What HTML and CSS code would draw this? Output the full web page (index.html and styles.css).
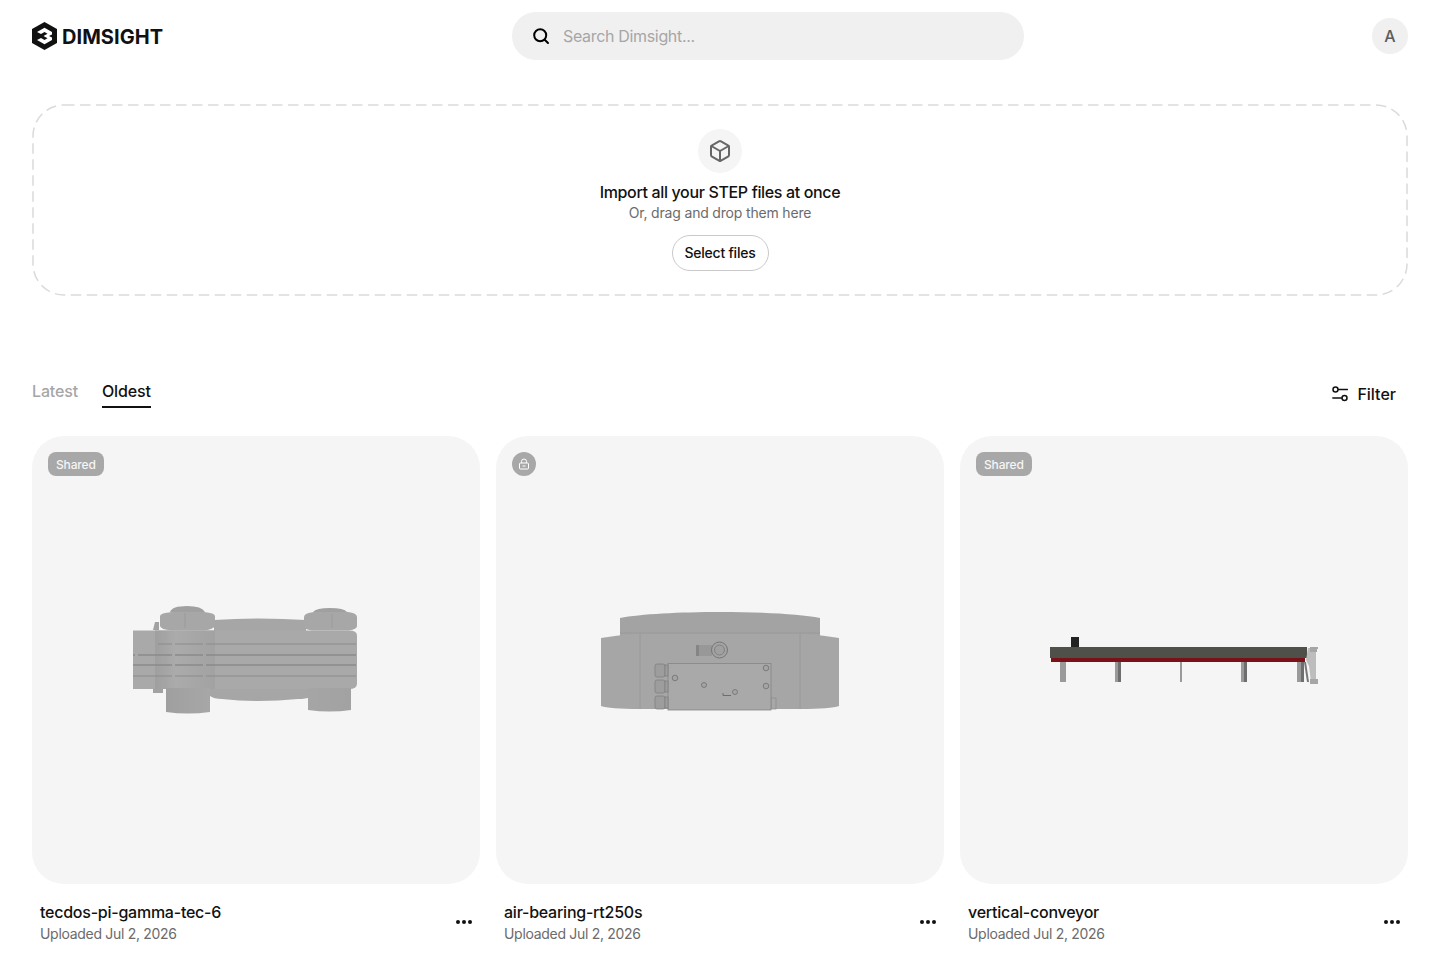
FILE: index.html
```html
<!DOCTYPE html>
<html lang="en">
<head>
<meta charset="utf-8">
<title>Dimsight</title>
<link rel="stylesheet" href="styles.css">
</head>
<body>
<header class="topbar">
  <a class="brand">
    <svg class="brand-mark" viewBox="0 0 25 28"><path d="M12.5 0 25 7v14l-12.500 7L0 21V7z" fill="#111"/><path d="M5 10 12.500 5.800 20 10v2.400l-3 1.600 3 1.600V18l-7.500 4.200L5 18l4-1.900 3.500 1.900 3-1.700-4-2.300 4-2.300-3-1.700L9 11.900z" fill="#fff"/></svg>
    <span class="brand-name">DIMSIGHT</span>
  </a>
  <label class="search">
    <svg class="search-icon" viewBox="0 0 18 18"><circle cx="8.200" cy="8.200" r="6" fill="none" stroke="#000" stroke-width="2"/><path d="m12.700 12.700 3.300 3.300" stroke="#000" stroke-width="2" stroke-linecap="round"/></svg>
    <span class="search-placeholder">Search Dimsight...</span>
  </label>
  <div class="avatar">A</div>
</header>

<section class="dropzone">
  <svg class="dash-frame"><rect class="dash-rect" rx="31" ry="31"/></svg>
  <div class="drop-icon">
    <svg viewBox="0 0 24 24" fill="none" stroke="#666" stroke-width="2" stroke-linejoin="round" stroke-linecap="round"><path d="M21 8a2 2 0 0 0-1-1.730l-7-4a2 2 0 0 0-2 0l-7 4A2 2 0 0 0 3 8v8a2 2 0 0 0 1 1.730l7 4a2 2 0 0 0 2 0l7-4A2 2 0 0 0 21 16Z"/><path d="m3.300 7 8.700 5 8.700-5"/><path d="M12 22V12"/></svg>
  </div>
  <h2 class="drop-title">Import all your STEP files at once</h2>
  <p class="drop-sub">Or, drag and drop them here</p>
  <button class="select-btn">Select files</button>
</section>

<div class="toolbar">
  <nav class="tabs">
    <span class="tab">Latest</span>
    <span class="tab tab-active">Oldest</span>
  </nav>
  <button class="filter">
    <svg class="filter-icon" viewBox="0 0 16 16" fill="none" stroke="#111" stroke-width="1.500" stroke-linecap="round"><circle cx="3.500" cy="3.500" r="2.500"/><path d="M6.500 3.500H15.500"/><circle cx="12.500" cy="12" r="2.500"/><path d="M.8 12h8.700"/></svg>
    <span>Filter</span>
  </button>
</div>

<main class="grid">
  <article class="item">
    <div class="thumb">
      <span class="badge">Shared</span>
      <svg class="model" viewBox="32 436 448 448">
        <defs>
          <linearGradient id="cyl" x1="0" x2="1" y1="0" y2="0">
            <stop offset="0" stop-color="#9f9f9f"/><stop offset=".35" stop-color="#ababab"/><stop offset="1" stop-color="#a2a2a2"/>
          </linearGradient>
        </defs>
        <path d="M214 620q46-3 92 0v12h-92zM210 688h100v9q-4 2-12 2-40 4-76 0-8 0-12-3z" fill="#a6a6a6"/>
        <path d="M133 630.500h216q8 0 8 5v48q0 5.500-8 5.500H133z" fill="#a9a9a9"/>
        <path d="M155 630.500h60v58.500h-60z" fill="url(#cyl)"/>
        <path d="M153 630l2-8h4v8zM153 689h10v4h-10z" fill="#a2a2a2"/>
        <path d="M166 688h44v24q-22 3-44 0zM308 688h43v22q-21 3-43 0z" fill="url(#cyl)"/>
        <path d="M160 616q0-3 12-4h32q11 1 11 4v10q-2 3-10 4.500h-34q-10-1-11-4.500z" fill="#a7a7a7"/>
        <path d="M170 612q2-6 17-6t18 6z" fill="#a0a0a0"/>
        <path d="M304 617q0-4 10-5h34q9 1 9 5v9q0 3-8 4.500h-37q-8-1-8-4.500z" fill="#a7a7a7"/>
        <path d="M313 612q3-4 17-4t17 4z" fill="#a0a0a0"/>
        <path d="M185 613v15M332 614v14" stroke="#9b9b9b"/>
        <g class="seams">
          <path d="M158 644h14m3 0h28m3 0h150" stroke-width="1"/>
          <path d="M133 655h2m3 0h34m3 0h28m3 0h150" stroke-width="1.500"/>
          <path d="M133 665h39m3 0h28m3 0h150" stroke-width="1.500"/>
          <path d="M133 676h39m3 0h28m3 0h150" stroke-width="1"/>
        </g>
      </svg>
    </div>
    <div class="meta">
      <div class="meta-text"><h3 class="name">tecdos-pi-gamma-tec-6</h3><p class="date">Uploaded Jul 2, 2026</p></div>
      <button class="more"><i></i><i></i><i></i></button>
    </div>
  </article>

  <article class="item">
    <div class="thumb">
      <span class="badge badge-round">
        <svg viewBox="0 0 12 12" fill="none" stroke="#fff" stroke-width="1"><rect x="1.500" y="5" width="9" height="6" rx="1"/><path d="M3.500 5V3.500a2.500 2.500 0 0 1 5 0V5M4.500 8h3"/></svg>
      </span>
      <svg class="model" viewBox="496 436 448 448">
        <path d="M620 618c20-4 60-6 100-6s80 2 100 6v18H620z" fill="#a3a3a3"/>
        <path d="M601 638q12-2 39-5h160q27 3 39 5v68q-8 3-39 3H640q-31 0-39-3z" fill="#a6a6a6"/>
        <path d="M640 633v76M800 633v76M620 633h200" fill="none" stroke="#989898" stroke-width=".8"/>
        <path d="M696 645h16v11h-16z" fill="#989898"/>
        <path d="M696 645h3v11h-3z" fill="#858585"/>
        <circle cx="719.500" cy="650" r="8" fill="#a4a4a4" stroke="#757575"/>
        <circle cx="719.500" cy="650" r="5" fill="#a0a0a0" stroke="#808080"/>
        <rect x="771" y="698" width="5" height="11" fill="#a8a8a8" stroke="#8a8a8a" stroke-width=".7"/>
        <rect x="668" y="663.500" width="103" height="46.500" fill="#a9a9a9" stroke="#858585" stroke-width=".8"/>
        <g fill="#9d9d9d" stroke="#7d7d7d" stroke-width=".7">
          <rect x="655" y="664" width="10" height="13" rx="2"/>
          <rect x="655" y="680" width="10" height="13" rx="2"/>
          <rect x="655" y="696" width="10" height="13" rx="2"/>
          <rect x="665" y="665" width="3" height="11"/>
          <rect x="665" y="681" width="3" height="11"/>
          <rect x="665" y="697" width="3" height="11"/>
        </g>
        <g fill="#a4a4a4" stroke="#707070" stroke-width=".8">
          <circle cx="675" cy="678" r="2.800"/>
          <circle cx="704" cy="685" r="2.500"/>
          <circle cx="735" cy="692" r="2.500"/>
          <circle cx="766" cy="668" r="2.800"/>
          <circle cx="766" cy="686" r="2.800"/>
        </g>
        <path d="M723 693v2.500h8" fill="none" stroke="#666" stroke-width=".9"/>
      </svg>
    </div>
    <div class="meta">
      <div class="meta-text"><h3 class="name">air-bearing-rt250s</h3><p class="date">Uploaded Jul 2, 2026</p></div>
      <button class="more"><i></i><i></i><i></i></button>
    </div>
  </article>

  <article class="item">
    <div class="thumb">
      <span class="badge">Shared</span>
      <svg class="model" viewBox="960 436 448 448">
        <rect x="1071" y="637" width="8" height="10" fill="#222"/>
        <rect x="1050" y="647" width="257" height="11" fill="#50504b"/>
        <rect x="1051" y="658" width="254" height="4" fill="#7b1118"/>
        <g fill="#9a9a9a">
          <rect x="1060" y="662" width="6" height="20"/>
          <rect x="1115" y="662" width="6" height="20"/>
          <rect x="1180" y="662" width="2" height="20"/>
          <rect x="1241" y="662" width="6" height="20"/>
          <rect x="1297" y="662" width="7" height="20"/>
        </g>
        <g fill="#6e6e6e">
          <rect x="1118" y="662" width="3" height="20"/>
          <rect x="1244" y="662" width="3" height="20"/>
          <rect x="1301" y="662" width="3" height="20"/>
        </g>
        <path d="M1308 648h8v34h-5l-2-16-3-6z" fill="#bdbdbd"/>
        <path d="M1304 662l3 20h2l-3-20z" fill="#777"/>
        <path d="M1310 647h8v2h-1v3h-7zM1310 679h8v5h-8z" fill="#a6a6a6"/>
      </svg>
    </div>
    <div class="meta">
      <div class="meta-text"><h3 class="name">vertical-conveyor</h3><p class="date">Uploaded Jul 2, 2026</p></div>
      <button class="more"><i></i><i></i><i></i></button>
    </div>
  </article>
</main>
</body>
</html>
```

FILE: styles.css
```css
* { box-sizing: border-box; }
html, body { margin: 0; padding: 0; background: #fff; }
body {
  font-family: "Inter", "Liberation Sans", sans-serif;
  color: #111;
  padding: 0 32px;
}
h2, h3, p { margin: 0; font-weight: 500; }
button { font: inherit; color: inherit; background: none; border: 0; padding: 0; }

.topbar {
  display: flex;
  align-items: center;
  height: 72px;
}
.brand { display: flex; align-items: center; gap: 5px; width: 480px; }
.brand-mark { width: 25px; height: 28px; display: block; }
.brand-name { font-size: 20px; font-weight: 700; line-height: 28px; letter-spacing: 0.05px; color: #111; padding-top: 1px; }
.search {
  display: flex;
  align-items: center;
  gap: 13px;
  width: 512px;
  height: 48px;
  padding: 0 20px;
  border-radius: 24px;
  background: #f0f0f0;
}
.search-icon { width: 18px; height: 18px; display: block; }
.search-placeholder { font-size: 16px; color: #a6a6a6; letter-spacing: -0.33px; }
.avatar {
  width: 36px;
  height: 36px;
  margin-left: 348px;
  border-radius: 50%;
  background: #f0f0f0;
  color: #5c5c5c;
  font-size: 16px;
  font-weight: 500;
  display: flex;
  align-items: center;
  justify-content: center;
}

.dropzone {
  position: relative;
  margin-top: 32px;
  height: 192px;
  display: flex;
  flex-direction: column;
  align-items: center;
  padding-top: 25px;
}
.dash-frame { position: absolute; top: 0; left: 0; width: 100%; height: 100%; display: block; }
.dash-rect {
  x: 1px;
  y: 1px;
  width: calc(100% - 2px);
  height: calc(100% - 2px);
  fill: none;
  stroke: #dadada;
  stroke-width: 1.5;
  stroke-dasharray: 10.500 5.500;
}
.drop-icon {
  width: 44px;
  height: 44px;
  border-radius: 50%;
  background: #f5f5f5;
  display: flex;
  align-items: center;
  justify-content: center;
}
.drop-icon svg { width: 24px; height: 24px; display: block; }
.drop-title { margin-top: 8px; font-size: 16px; line-height: 22px; color: #111; letter-spacing: -0.35px; }
.drop-sub { font-size: 14px; line-height: 20px; font-weight: 400; color: #6b6b6b; letter-spacing: -0.18px; }
.select-btn {
  margin-top: 12px;
  width: 97px;
  height: 36px;
  padding-bottom: 2px;
  border: 1px solid #c9c9c9;
  border-radius: 18px;
  font-size: 14px;
  font-weight: 500;
  letter-spacing: -0.22px;
  background: #fff;
}

.toolbar {
  margin-top: 82px;
  height: 32px;
  display: flex;
  justify-content: space-between;
  align-items: flex-start;
}
.tabs { display: flex; gap: 24px; }
.tab { font-size: 16px; line-height: 26px; height: 30px; font-weight: 500; letter-spacing: -0.15px; color: #a6a6a6; }
.tab-active { color: #111; border-bottom: 2px solid #111; }
.filter {
  display: flex;
  align-items: center;
  gap: 9px;
  height: 32px;
  margin-right: 12px;
  font-size: 16px;
  font-weight: 500;
}
.filter-icon { width: 16px; height: 16px; display: block; }

.grid {
  margin-top: 26px;
  display: grid;
  grid-template-columns: repeat(3, 448px);
  gap: 16px;
}
.thumb {
  position: relative;
  width: 448px;
  height: 448px;
  border-radius: 32px;
  background: #f5f5f5;
  overflow: hidden;
}
.model { width: 448px; height: 448px; display: block; }
.seams path { fill: none; stroke: #8b8b8b; }
.badge {
  position: absolute;
  top: 16px;
  left: 16px;
  height: 24px;
  padding: 1px 8px 0;
  border-radius: 8px;
  background: #a8a8a8;
  color: #f5f5f5;
  font-size: 12px;
  font-weight: 500;
  line-height: 24px;
  letter-spacing: -0.15px;
}
.badge-round {
  width: 24px;
  padding: 0;
  border-radius: 50%;
  display: flex;
  align-items: center;
  justify-content: center;
}
.badge-round svg { width: 12px; height: 12px; display: block; }
.meta {
  display: flex;
  justify-content: space-between;
  align-items: center;
  padding: 16px 8px 10px;
}
.name { font-size: 16px; line-height: 24px; font-weight: 500; color: #111; letter-spacing: -0.24px; }
.date { font-size: 14px; line-height: 20px; font-weight: 400; color: #6b6b6b; letter-spacing: -0.3px; }
.more { display: flex; gap: 2px; width: 16px; }
.more i { width: 4px; height: 4px; border-radius: 50%; background: #111; display: block; }
```
